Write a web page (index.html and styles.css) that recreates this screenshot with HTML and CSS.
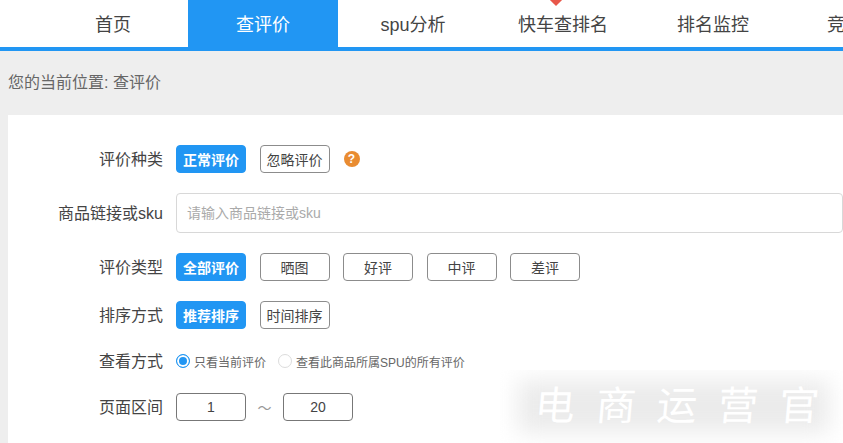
FILE: index.html
```html
<!DOCTYPE html>
<html lang="zh-CN">
<head>
    <meta charset="UTF-8">
    <title>查评价</title>
    <link rel="stylesheet" href="styles.css">
</head>
<body>
    <div class="nav">
        <a class="nav-item">首页</a>
        <a class="nav-item active">查评价</a>
        <a class="nav-item">spu分析</a>
        <a class="nav-item hot">快车查排名</a>
        <a class="nav-item">排名监控</a>
        <a class="nav-item">竞品分析</a>
    </div>

    <div class="crumb">您的当前位置: 查评价</div>

    <div class="card">
        <div class="row row-kind">
            <label class="row-label">评价种类</label>
            <button class="btn on">正常评价</button>
            <button class="btn">忽略评价</button>
            <span class="help">?</span>
        </div>
        <div class="row row-link">
            <label class="row-label">商品链接或sku</label>
            <input class="link-input" type="text" placeholder="请输入商品链接或sku">
        </div>
        <div class="row row-type">
            <label class="row-label">评价类型</label>
            <button class="btn on">全部评价</button>
            <button class="btn">晒图</button>
            <button class="btn">好评</button>
            <button class="btn">中评</button>
            <button class="btn">差评</button>
        </div>
        <div class="row row-sort">
            <label class="row-label">排序方式</label>
            <button class="btn on">推荐排序</button>
            <button class="btn">时间排序</button>
        </div>
        <div class="row row-view">
            <label class="row-label">查看方式</label>
            <span class="radio checked"></span>
            <span class="radio-text">只看当前评价</span>
            <span class="radio"></span>
            <span class="radio-text">查看此商品所属SPU的所有评价</span>
        </div>
        <div class="row row-page">
            <label class="row-label">页面区间</label>
            <input class="page-input" type="text" value="1">
            <span class="tilde">～</span>
            <input class="page-input" type="text" value="20">
        </div>
    </div>

    <div class="mark"><span class="mark-text">电商运营官</span></div>
</body>
</html>
```

FILE: styles.css
```css
* {
    box-sizing: border-box;
}
html, body {
    height: 443px;
    overflow: hidden;
}
body {
    margin: 0;
    position: relative;
    background-color: #eeeeee;
    color: #444;
    font-family: "Liberation Sans", "Noto Sans CJK SC", sans-serif;
}
.nav {
    display: flex;
    height: 51px;
    padding-left: 38px;
    background-color: white;
    border-bottom: 4px solid #2196f3;
    overflow: hidden;
}
.nav-item {
    position: relative;
    flex: 0 0 150px;
    line-height: 50px;
    text-align: center;
    font-size: 18px;
    white-space: nowrap;
}
.nav-item.active {
    background-color: #2196f3;
    color: white;
}
.nav-item.hot::before {
    content: "";
    position: absolute;
    left: 63px;
    top: -6px;
    width: 10px;
    height: 10px;
    background-color: #e8574a;
    transform: rotate(45deg);
}
.crumb {
    height: 64px;
    padding: 23px 0 0 8px;
    font-size: 16px;
    line-height: 18px;
    color: #666;
}
.card {
    margin-left: 8px;
    padding-top: 30px;
    height: 328px;
    background-color: white;
}
.row {
    display: flex;
    align-items: center;
}
.row-label {
    flex: 0 0 155px;
    margin-right: 13px;
    padding-bottom: 2px;
    text-align: right;
    font-size: 16px;
}
.row-kind, .row-sort, .row-page, .row-type {
    height: 28px;
}
.row-link {
    height: 40px;
    margin-top: 20px;
}
.row-type {
    margin-top: 20px;
}
.row-sort {
    margin-top: 20px;
}
.row-view {
    height: 20px;
    margin-top: 22px;
}
.row-page {
    margin-top: 22px;
}
.btn {
    width: 70px;
    height: 28px;
    margin: 0 13.5px 0 0;
    padding: 0 0 1px;
    background-color: white;
    border: 1px solid #8c8c8c;
    border-radius: 4px;
    color: #444;
    font-family: inherit;
    font-size: 14px;
}
.btn.on {
    background-color: #2196f3;
    border-color: #2196f3;
    color: white;
    font-weight: bold;
}
.help {
    width: 16px;
    height: 16px;
    margin-left: 0.5px;
    border-radius: 50%;
    background-color: #e98c31;
    color: white;
    font-size: 12px;
    font-weight: bold;
    line-height: 16px;
    text-align: center;
}
.link-input {
    width: 700px;
    height: 40px;
    padding: 0 10px;
    border: 1px solid #d8d8d8;
    border-radius: 4px;
    font-family: inherit;
    font-size: 14px;
}
.link-input::placeholder {
    color: #aaa;
}
.radio {
    width: 14px;
    height: 14px;
    margin-right: 4px;
    border: 1px solid #dcdcdc;
    border-radius: 50%;
    background-color: white;
}
.radio.checked {
    border-color: #2196f3;
    background-color: #2196f3;
    box-shadow: inset 0 0 0 2px white;
}
.radio-text {
    margin-right: 12px;
    font-size: 12px;
    color: #666;
}
.page-input {
    width: 70px;
    height: 28px;
    border: 1px solid #777;
    border-radius: 4px;
    color: #444;
    font-family: inherit;
    font-size: 14px;
    text-align: center;
}
.tilde {
    width: 37px;
    text-align: center;
    font-size: 14px;
    color: #999;
}
/* watermark sits on top of the page */
.mark {
    position: absolute;
    left: 500px;
    top: 370px;
    width: 343px;
    height: 73px;
    overflow: hidden;
}
.mark::before {
    content: "";
    position: absolute;
    left: 18px;
    right: 14px;
    top: 10px;
    bottom: 10px;
    background-color: #ebebeb;
    filter: blur(11px);
}
.mark-text {
    display: block;
    position: relative;
    padding-left: 35px;
    color: white;
    font-size: 40px;
    letter-spacing: 21px;
    line-height: 73px;
    white-space: nowrap;
    transform: skewX(-5deg);
}
```
